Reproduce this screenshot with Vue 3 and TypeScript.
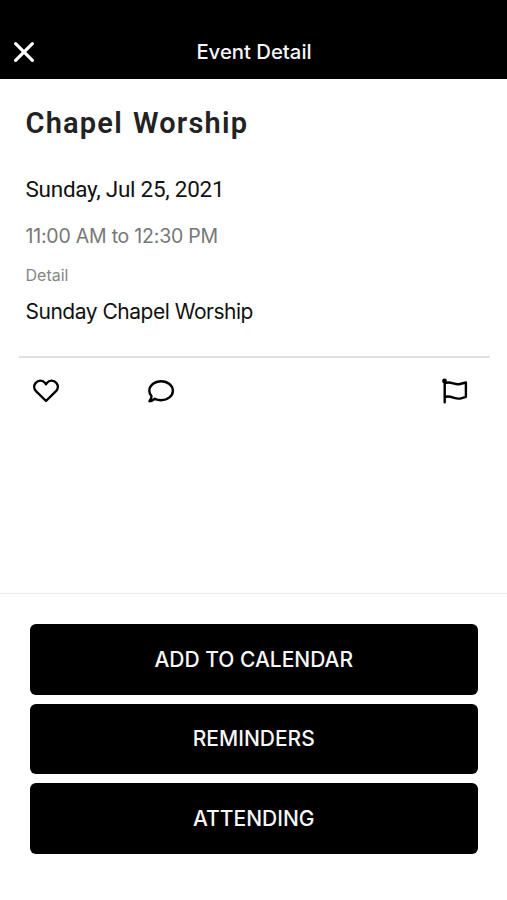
<script setup lang="ts">
interface EventInfo {
  title: string
  date: string
  time: string
  label: string
  detail: string
}

const event: EventInfo = {
  title: 'Chapel Worship',
  date: 'Sunday, Jul 25, 2021',
  time: '11:00 AM to 12:30 PM',
  label: 'Detail',
  detail: 'Sunday Chapel Worship',
}

const actions: string[] = ['ADD TO CALENDAR', 'REMINDERS', 'ATTENDING']
</script>

<template>
  <div class="screen">
    <header class="bar">
      <button class="close" aria-label="Close">
        <svg width="24" height="24" viewBox="0 0 24 24">
          <path d="M3.6 3.6 20.4 20.4M20.4 3.6 3.6 20.4" />
        </svg>
      </button>
      <h1 class="bar-title">Event Detail</h1>
    </header>

    <main class="content">
      <h2 class="title">{{ event.title }}</h2>
      <p class="date">{{ event.date }}</p>
      <p class="time">{{ event.time }}</p>
      <p class="label">{{ event.label }}</p>
      <p class="detail">{{ event.detail }}</p>
    </main>

    <div class="social">
      <button aria-label="Like">
        <svg width="30" height="30" viewBox="0 0 30 30">
          <path d="M15 25 5 15.1C2.8 12.8 2.6 9.4 4.6 6.9 7.2 3.8 11.8 3.9 14 6.9L15 8.3 16 6.9C18.2 3.9 22.8 3.8 25.4 6.9 27.4 9.4 27.2 12.8 25 15.1Z" />
        </svg>
      </button>
      <button class="comment" aria-label="Comment">
        <svg width="30" height="30" viewBox="0 0 30 30">
          <path d="M3.4 25.2C4.7 23.8 5.5 22 5.5 20.1 4 18.5 3.3 16.7 3.3 14.7 3.3 9.4 8.6 5.2 15.1 5.2S26.9 9.4 26.9 14.7 21.6 24.2 15.1 24.2C12.7 24.2 10.6 23.7 8.8 22.7 7.3 24.2 5.4 25.1 3.4 25.2Z" />
        </svg>
      </button>
      <button class="flag" aria-label="Report">
        <svg width="30" height="30" viewBox="0 0 30 30">
          <circle class="knob" cx="4.5" cy="5" r="2.4" />
          <path d="M4.7 5V26.3M4.7 7.2C11 4.7 14.5 9.5 20 8L25.9 6.5V20.8L21 22.3C15 24 11.3 18.8 4.7 21" />
        </svg>
      </button>
    </div>

    <footer class="actions">
      <button v-for="action in actions" :key="action" class="action">{{ action }}</button>
    </footer>
  </div>
</template>

<style>
body {
  background: #fff;
}
</style>

<style scoped>
.screen {
  display: flex;
  flex-direction: column;
  width: 100%;
  height: 900px;
  box-sizing: border-box;
  background: #fff;
  color: #111;
  font-family: Inter, 'Liberation Sans', sans-serif;
}
h1, h2, p {
  margin: 0;
  font-weight: 400;
  white-space: nowrap;
}
button {
  padding: 0;
  border: 0;
  background: none;
  font: inherit;
  color: inherit;
}
svg {
  display: block;
  fill: none;
  stroke: #000;
  stroke-width: 2.4;
  stroke-linecap: round;
  stroke-linejoin: round;
}
.knob {
  fill: #000;
  stroke: none;
}
.bar {
  display: grid;
  grid-template-columns: 48px 1fr 48px;
  align-items: center;
  height: 79px;
  box-sizing: border-box;
  padding-top: 25px;
  background: #000;
  color: #f7f7f7;
}
.close {
  padding-left: 12px;
}
.close svg {
  stroke: #fff;
  stroke-width: 3.2;
}
.bar-title {
  padding-left: 1px;
  text-align: center;
  font-size: 20.3px;
  line-height: 24px;
  font-weight: 500;
}
.content {
  height: 277px;
  box-sizing: border-box;
  padding: 24px 25.5px 0;
}
.title {
  font: 600 29px/40px Roboto, sans-serif;
  letter-spacing: 1.2px;
  word-spacing: 1.7px;
  color: #222;
}
.date {
  margin-top: 31px;
  font: 400 22.5px/30px Roboto, sans-serif;
  letter-spacing: -0.27px;
}
.time {
  margin-top: 17px;
  font-size: 19.5px;
  line-height: 30px;
  letter-spacing: -0.22px;
  color: #777;
}
.label {
  margin-top: 14px;
  font-size: 16px;
  line-height: 20px;
  color: #858585;
}
.detail {
  margin-top: 12px;
  font-size: 21px;
  line-height: 30px;
  letter-spacing: -0.48px;
}
.social {
  display: flex;
  margin: 0 17px 0 19px;
  padding: 18px 20px 0 12px;
  border-top: 2px solid #e0e0e0;
}
.comment {
  margin-left: 85px;
}
.flag {
  margin-left: auto;
}
.actions {
  display: flex;
  flex-direction: column;
  gap: 9px;
  margin-top: auto;
  height: 307px;
  box-sizing: border-box;
  padding: 30px 29.5px 0 30px;
  border-top: 1px solid #e9e9e9;
}
.action {
  height: 70.5px;
  border-radius: 6px;
  background: #000;
  color: #f7f7f7;
  font-size: 21px;
  font-weight: 500;
}
</style>
